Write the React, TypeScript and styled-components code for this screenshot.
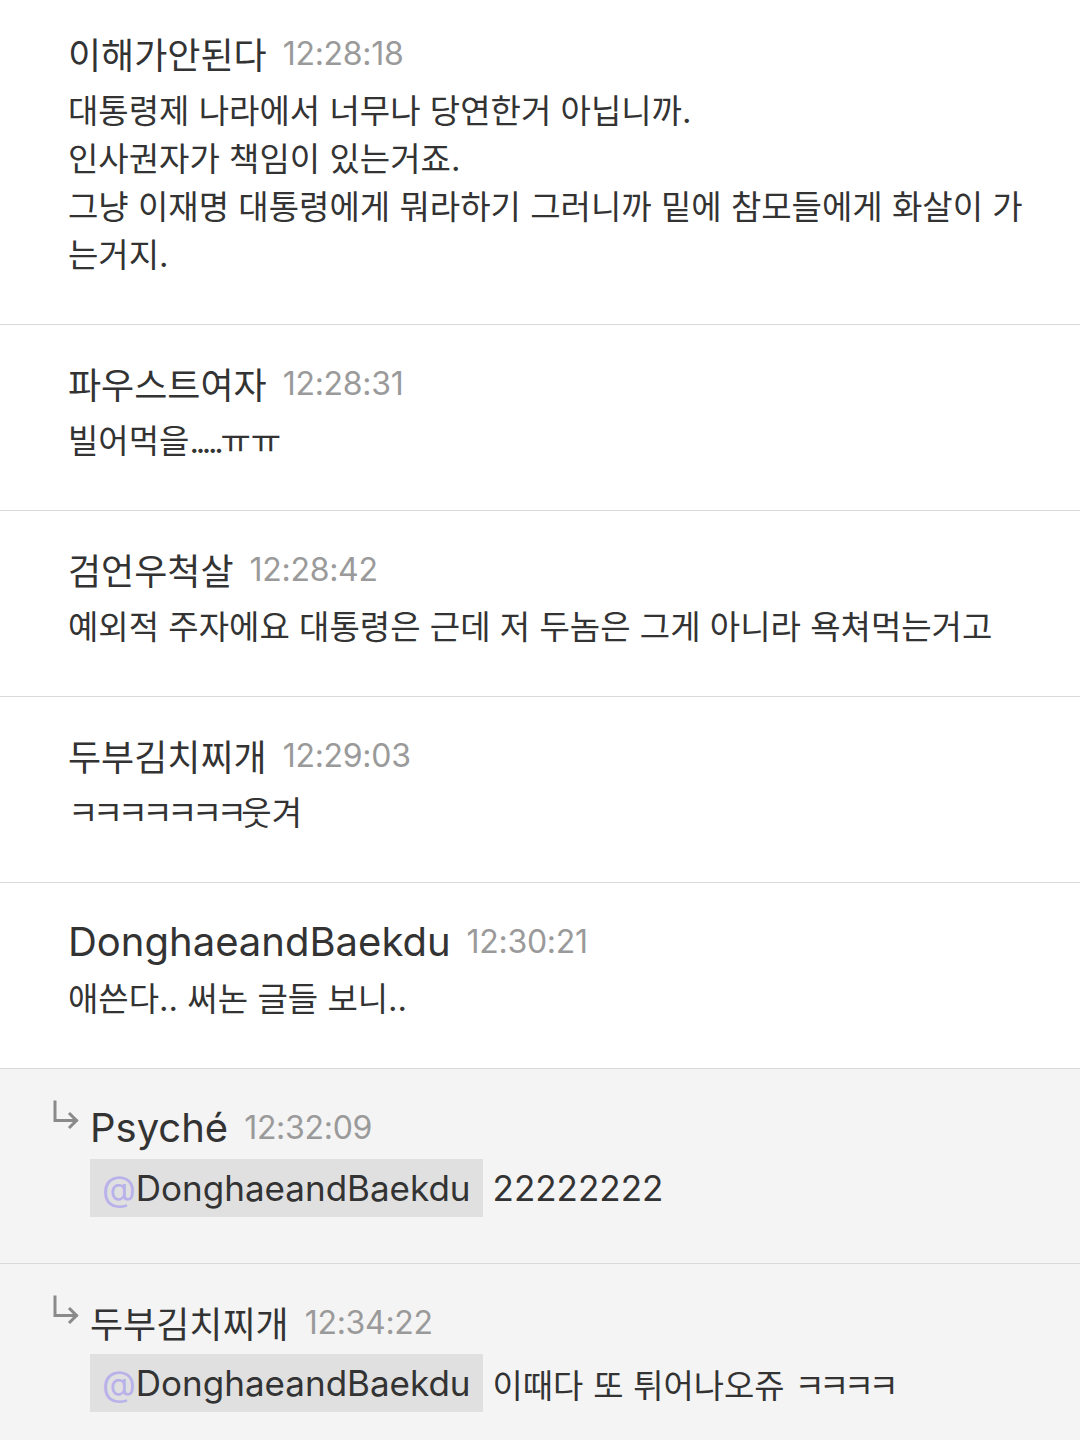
import React from "react";
import styled, { createGlobalStyle } from "styled-components";

const Global = createGlobalStyle`
  html, body { margin: 0; padding: 0; background: #ffffff; }
  body { font-family: Inter, "Noto Sans CJK KR", sans-serif; color: #333333; }
`;

const List = styled.div`
  display: flex;
  flex-direction: column;
  margin-top: -5px;
`;

const Item = styled.div<{ $reply?: boolean }>`
  display: flex;
  flex-direction: column;
  padding: 34px 40px ${(p) => (p.$reply ? "46px" : "45px")} ${(p) => (p.$reply ? "90px" : "68px")};
  background: ${(p) => (p.$reply ? "#f4f4f4" : "#ffffff")};
  border-bottom: 1px solid #d9d9d9;
  position: relative;
`;

const Header = styled.div`
  display: flex;
  align-items: center;
  gap: 16px;
  height: 48px;
  white-space: nowrap;
`;

const ArrowIcon = styled.svg`
  position: absolute;
  left: 52px;
  top: 31px;
  width: 30px;
  height: 32px;
`;

const Name = styled.span`
  font-size: 40px;
  color: #333333;
`;

const Time = styled.span`
  font-size: 32px;
  color: #9a9a9a;
  letter-spacing: -0.3px;
`;

const Body = styled.div`
  margin-top: 10px;
  font-size: 33px;
  line-height: 48px;
  color: #333333;
  white-space: pre-wrap;
  line-break: anywhere;
`;

const ReplyBody = styled.div`
  margin-top: 8px;
  display: flex;
  align-items: center;
  gap: 10px;
  font-size: 35px;
  color: #333333;
  white-space: nowrap;
`;

const Mention = styled.span`
  display: inline-flex;
  align-items: center;
  height: 58px;
  padding: 0 12px;
  background: #e0e0e0;
  color: #333333;
`;

const At = styled.span`
  color: #b9b1ea;
`;

const Hangul = styled.span<{ $scale: number }>`
  font-size: ${(p) => p.$scale}em;
`;

const Kieuk = styled.span<{ $scale: number }>`
  font-size: ${(p) => p.$scale}em;
  letter-spacing: -0.17em;
`;

const Dots = styled.span`
  letter-spacing: -0.1em;
`;

const SYL = /[\uAC00-\uD7A3\u3131-\u3139\u313B-\u318E]/;

function Mixed({ text, scale }: { text: string; scale: number }) {
  const splitter =
    scale === 1 ? /(ㅋ+|\.{3,})/ : /([\uAC00-\uD7A3\u3131-\u3139\u313B-\u318E]+|ㅋ+|\.{3,})/;
  const parts = text.split(splitter);
  return (
    <>
      {parts.map((p, i) => {
        if (!p) return null;
        if (p[0] === "ㅋ")
          return (
            <Kieuk key={i} $scale={scale}>
              {p}
            </Kieuk>
          );
        if (/^\.{3,}$/.test(p)) return <Dots key={i}>{p}</Dots>;
        if (scale !== 1 && SYL.test(p))
          return (
            <Hangul key={i} $scale={scale}>
              {p}
            </Hangul>
          );
        return <React.Fragment key={i}>{p}</React.Fragment>;
      })}
    </>
  );
}

type C = { name: string; time: string; body?: string; reply?: boolean; mention?: string; text?: string };

const comments: C[] = [
  {
    name: "이해가안된다",
    time: "12:28:18",
    body: "대통령제 나라에서 너무나 당연한거 아닙니까.\n인사권자가 책임이 있는거죠.\n그냥 이재명 대통령에게 뭐라하기 그러니까 밑에 참모들에게 화살이 가는거지.",
  },
  { name: "파우스트여자", time: "12:28:31", body: "빌어먹을.....ㅠㅠ" },
  { name: "검언우척살", time: "12:28:42", body: "예외적 주자에요 대통령은 근데 저 두놈은 그게 아니라 욕쳐먹는거고" },
  { name: "두부김치찌개", time: "12:29:03", body: "ㅋㅋㅋㅋㅋㅋㅋ웃겨" },
  { name: "DonghaeandBaekdu", time: "12:30:21", body: "애쓴다.. 써논 글들 보니.." },
  { name: "Psyché", time: "12:32:09", reply: true, mention: "DonghaeandBaekdu", text: "22222222" },
  { name: "두부김치찌개", time: "12:34:22", reply: true, mention: "DonghaeandBaekdu", text: "이때다 또 튀어나오쥬 ㅋㅋㅋㅋ" },
];

function ReplyArrow() {
  return (
    <ArrowIcon viewBox="0 0 30 32" fill="none" stroke="#8a8a8a" strokeWidth="3" strokeLinecap="square">
      <path d="M3 2 V20.5 H24" />
      <path d="M17 13 L24.5 20.5 L17 28" strokeLinecap="butt" strokeLinejoin="miter" />
    </ArrowIcon>
  );
}

export default function App() {
  return (
    <>
      <Global />
      <List>
        {comments.map((c, i) => (
          <Item key={i} $reply={c.reply}>
            {c.reply && <ReplyArrow />}
            <Header>
              <Name>
                <Mixed text={c.name} scale={0.9} />
              </Name>
              <Time>{c.time}</Time>
            </Header>
            {c.reply ? (
              <ReplyBody>
                <Mention>
                  <At>@</At>
                  {c.mention}
                </Mention>
                <span>
                  <Mixed text={c.text || ""} scale={0.94} />
                </span>
              </ReplyBody>
            ) : (
              <Body>
                <Mixed text={c.body || ""} scale={1} />
              </Body>
            )}
          </Item>
        ))}
      </List>
    </>
  );
}
